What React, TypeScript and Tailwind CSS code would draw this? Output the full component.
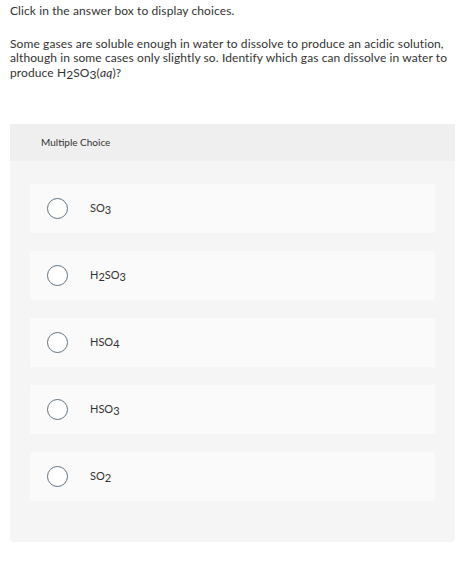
const Sub = ({ children }: { children: React.ReactNode }) => (
  <span className="align-[-0.2em] leading-none">{children}</span>
);

const choices = [
  { id: 'a', label: <>SO<Sub>3</Sub></> },
  { id: 'b', label: <>H<Sub>2</Sub>SO<Sub>3</Sub></> },
  { id: 'c', label: <>HSO<Sub>4</Sub></> },
  { id: 'd', label: <>HSO<Sub>3</Sub></> },
  { id: 'e', label: <>SO<Sub>2</Sub></> },
];

export default function App() {
  return (
    <div className="w-[474px] h-[574px] bg-white text-[#333] font-['Lato',sans-serif]">
      <div className="px-[10px] pt-[4px] text-[12px] leading-[14.5px] tracking-[0.1px]">
        <p>Click in the answer box to display choices.</p>
        {/* question text, broken as in the source */}
        <div className="mt-[18px]">
          <div>Some gases are soluble enough in water to dissolve to produce an acidic solution,</div>
          <div>although in some cases only slightly so. Identify which gas can dissolve in water to</div>
          <div>
            produce H<Sub>2</Sub>SO<Sub>3</Sub>(<i>aq</i>)?
          </div>
        </div>
      </div>

      <div className="mx-[10px] mt-[43px] w-[445px] h-[418px] bg-[#f5f5f5] rounded-sm">
        <div className="h-[37px] bg-[#efefef] flex items-center pl-[31px] text-[10px] text-[#333]">
          Multiple Choice
        </div>
        <div className="px-[20px] pt-[23px] flex flex-col gap-[18px]">
          {choices.map((c) => (
            <label
              key={c.id}
              className="h-[49px] bg-[#fafafa] flex items-center pl-[17px] cursor-pointer"
            >
              <span className="w-[21px] h-[21px] rounded-full border border-[#5f7182] bg-white shrink-0" />
              <span className="ml-[22px] text-[11px] text-[#333]">{c.label}</span>
            </label>
          ))}
        </div>
      </div>
    </div>
  );
}
